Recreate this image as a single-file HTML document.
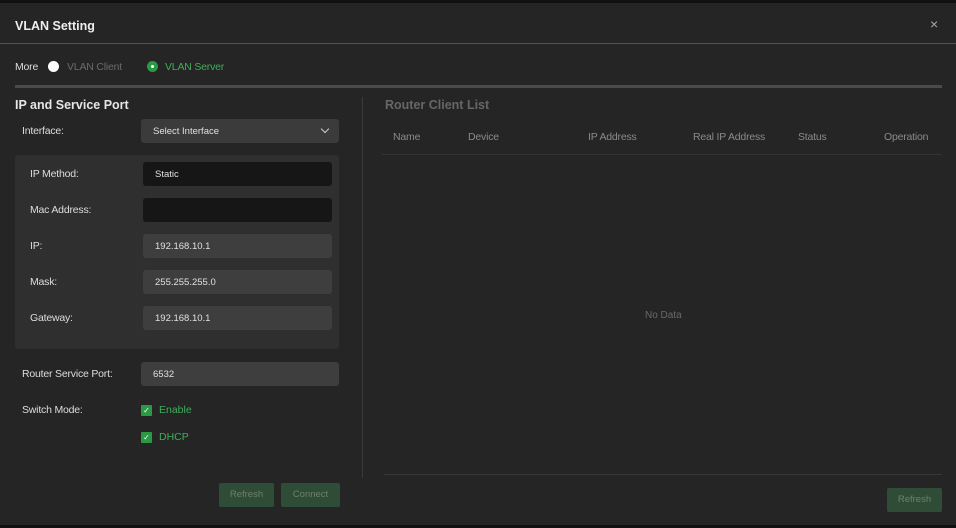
<!DOCTYPE html>
<html><head><style>
*{margin:0;padding:0;box-sizing:border-box}
body{width:956px;height:528px;background:#111;font-family:"Liberation Sans",sans-serif;position:relative;overflow:hidden;color:#ddd}
.dlg{position:absolute;left:0;top:3px;width:956px;height:522px;background:#252525}
.a{position:absolute}
.lbl{font-size:10.5px;color:#ddd;letter-spacing:-0.2px}
.inp{position:absolute;border-radius:3px;font-size:9.5px;color:#e0e0e0;padding-left:12px;line-height:25px}
.chk{position:absolute;width:11px;height:11px;background:#2a9a45;border-radius:1px;color:#fff;font-size:8px;line-height:11px;text-align:center}
.btn{position:absolute;background:#2f4d36;border-radius:2px;color:#6d7f70;font-size:9.5px;text-align:center;line-height:24px}
.th{position:absolute;top:131px;font-size:10.5px;color:#8a8a8a;letter-spacing:-0.2px}
</style></head><body>
<div class="dlg"></div>
<div class="a" style="left:15px;top:19px;font-size:12.5px;font-weight:bold;color:#eee">VLAN Setting</div>
<div class="a" style="left:930px;top:16px;font-size:14px;color:#aaa">×</div>
<div class="a" style="left:0;top:43px;width:956px;height:1px;background:#2f6a3d"></div>
<div class="a lbl" style="left:15px;top:61px">More</div>
<div class="a" style="left:48px;top:61px;width:11px;height:11px;border-radius:50%;background:#fff"></div>
<div class="a" style="left:67px;top:61px;font-size:10.5px;color:#6a6a6a;letter-spacing:-0.2px">VLAN Client</div>
<div class="a" style="left:147px;top:61px;width:11px;height:11px;border-radius:50%;background:#2a9a45"></div>
<div class="a" style="left:151px;top:65px;width:3px;height:3px;border-radius:50%;background:#fff"></div>
<div class="a" style="left:165px;top:61px;font-size:10.5px;color:#3fae5a;letter-spacing:-0.2px">VLAN Server</div>
<div class="a" style="left:15px;top:85px;width:927px;height:3px;background:#4a4a4a"></div>
<div class="a" style="left:15px;top:98px;font-size:12.5px;font-weight:bold;color:#e6e6e6">IP and Service Port</div>
<div class="a lbl" style="left:22px;top:125px">Interface:</div>
<div class="inp" style="left:141px;top:119px;width:198px;height:24px;background:#3b3b3b">Select Interface</div>
<div class="a" style="left:322px;top:126px;width:6px;height:6px;border-right:1.2px solid #ccc;border-bottom:1.2px solid #ccc;transform:rotate(45deg)"></div>
<div class="a" style="left:15px;top:155px;width:324px;height:194px;background:#2f2f2f;border-radius:3px"></div>
<div class="a lbl" style="left:30px;top:168px">IP Method:</div>
<div class="inp" style="left:143px;top:162px;width:189px;height:24px;background:#161616">Static</div>
<div class="a lbl" style="left:30px;top:204px">Mac Address:</div>
<div class="inp" style="left:143px;top:198px;width:189px;height:24px;background:#161616"></div>
<div class="a lbl" style="left:30px;top:240px">IP:</div>
<div class="inp" style="left:143px;top:234px;width:189px;height:24px;background:#3e3e3e">192.168.10.1</div>
<div class="a lbl" style="left:30px;top:276px">Mask:</div>
<div class="inp" style="left:143px;top:270px;width:189px;height:24px;background:#3e3e3e">255.255.255.0</div>
<div class="a lbl" style="left:30px;top:312px">Gateway:</div>
<div class="inp" style="left:143px;top:306px;width:189px;height:24px;background:#3e3e3e">192.168.10.1</div>
<div class="a lbl" style="left:22px;top:368px">Router Service Port:</div>
<div class="inp" style="left:141px;top:362px;width:198px;height:24px;background:#3e3e3e">6532</div>
<div class="a lbl" style="left:22px;top:404px">Switch Mode:</div>
<div class="chk" style="left:141px;top:405px">✓</div>
<div class="a" style="left:159px;top:404px;font-size:10.5px;color:#3fae5a">Enable</div>
<div class="chk" style="left:141px;top:432px">✓</div>
<div class="a" style="left:159px;top:431px;font-size:10.5px;color:#3fae5a">DHCP</div>
<div class="btn" style="left:219px;top:483px;width:55px;height:24px">Refresh</div>
<div class="btn" style="left:281px;top:483px;width:59px;height:24px">Connect</div>
<div class="a" style="left:362px;top:97px;width:1px;height:381px;background:#3a3a3a"></div>
<div class="a" style="left:385px;top:98px;font-size:12.5px;font-weight:bold;color:#666">Router Client List</div>
<div class="th" style="left:393px">Name</div>
<div class="th" style="left:468px">Device</div>
<div class="th" style="left:588px">IP Address</div>
<div class="th" style="left:693px">Real IP Address</div>
<div class="th" style="left:798px">Status</div>
<div class="th" style="left:884px">Operation</div>
<div class="a" style="left:382px;top:154px;width:560px;height:1px;background:#333"></div>
<div class="a" style="left:645px;top:310px;font-size:10px;color:#6a6a6a">No Data</div>
<div class="a" style="left:384px;top:474px;width:558px;height:1px;background:#383838"></div>
<div class="btn" style="left:887px;top:488px;width:55px;height:24px">Refresh</div>
</body></html>
